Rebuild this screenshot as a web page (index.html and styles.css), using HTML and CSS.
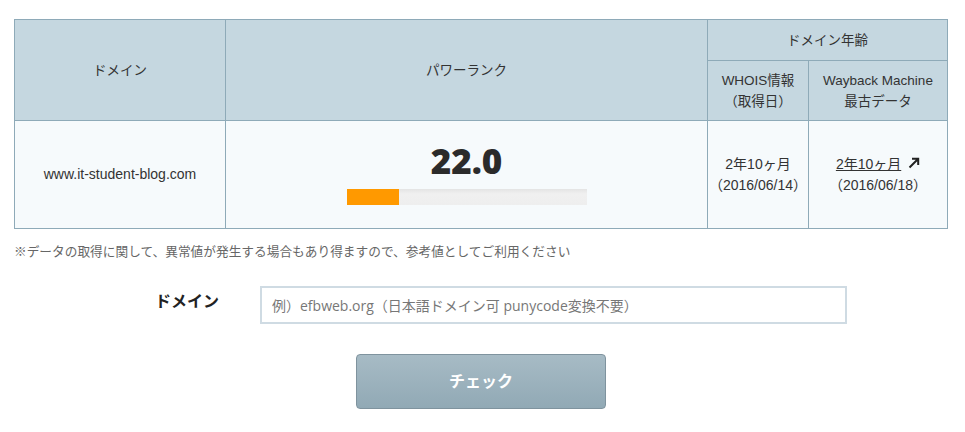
FILE: index.html
```html
<!DOCTYPE html>
<html lang="ja">
<head>
  <meta charset="UTF-8">
  <meta name="viewport" content="width=device-width, initial-scale=1.0">
  <title>パワーランクチェック</title>
  <link rel="stylesheet" href="styles.css">
</head>
<body>
  <div class="container">
    <table class="result">
      <colgroup>
        <col class="col-domain">
        <col class="col-rank">
        <col class="col-whois">
        <col class="col-wayback">
      </colgroup>
      <tr class="head-top">
        <th rowspan="2">ドメイン</th>
        <th rowspan="2">パワーランク</th>
        <th colspan="2">ドメイン年齢</th>
      </tr>
      <tr class="head-sub">
        <th>WHOIS情報<br>（取得日）</th>
        <th>Wayback Machine<br>最古データ</th>
      </tr>
      <tr class="body-row">
        <td class="domain">www.it-student-blog.com</td>
        <td>
          <div class="rank">22.0</div>
          <div class="bar"><div class="bar-fill" style="width: 22%"></div></div>
        </td>
        <td>2年10ヶ月<br>（2016/06/14）</td>
        <td>
          <a href="#" class="age-link">2年10ヶ月</a>
          <svg class="ext" width="12" height="12" viewBox="0 0 12 12"><path d="M1.5 10.5 L10 2 M4 1.8 H10.2 V8" fill="none" stroke="#222" stroke-width="2"/></svg>
          <br>（2016/06/18）
        </td>
      </tr>
    </table>

    <p class="note">※データの取得に関して、異常値が発生する場合もあり得ますので、参考値としてご利用ください</p>

    <form class="check-form">
      <div class="form-row">
        <label for="domain" class="form-label">ドメイン</label>
        <input type="text" id="domain" placeholder="例）efbweb.org（日本語ドメイン可 punycode変換不要）">
      </div>
      <button type="button" class="check-btn">チェック</button>
    </form>
  </div>
</body>
</html>
```

FILE: styles.css
```css
body {
  margin: 0;
  padding: 19px 14px 0;
  font-family: "Liberation Sans", "Noto Sans CJK JP", sans-serif;
  font-size: 13px;
  color: #333;
  background: #fff;
}

.container {
  width: 934px;
}

.result {
  width: 933px;
  border-collapse: collapse;
  table-layout: fixed;
}

.col-domain { width: 211px; }
.col-rank { width: 482px; }
.col-whois { width: 101px; }
.col-wayback { width: 139px; }

.result th,
.result td {
  border: 1px solid #8eaab8;
  text-align: center;
  vertical-align: middle;
  padding: 0;
  line-height: 21px;
}

.result th {
  background-color: #c5d7e0;
  font-weight: normal;
  font-size: 13.5px;
}

.result td {
  background-color: #f6fafc;
  font-size: 14px;
}

.head-top { height: 41px; }
.head-sub { height: 60px; }
.body-row { height: 108px; }

.rank {
  font-family: "Open Sans", sans-serif;
  font-weight: 800;
  font-size: 35px;
  line-height: 40px;
  color: #2b2b2b;
  margin-top: -4px;
}

.bar {
  width: 240px;
  height: 16px;
  margin: 8px auto 0;
  background: linear-gradient(#e4e4e4, #f0f0f0 30%, #eeeeee);
}

.bar-fill {
  height: 100%;
  background-color: #ff9900;
}

.age-link {
  color: #333;
  text-decoration: underline;
}

.ext {
  margin-left: 3px;
  vertical-align: 0;
}

.note {
  margin: 12px 0 0;
  font-size: 12.7px;
  color: #666;
}

.check-form {
  margin-top: 26px;
}

.form-row {
  display: flex;
  align-items: center;
}

.form-label {
  width: 246px;
  box-sizing: border-box;
  padding-left: 141px;
  font-size: 16px;
  font-weight: bold;
  color: #222;
  margin-top: -10px;
}

.form-row input {
  width: 587px;
  height: 38px;
  box-sizing: border-box;
  border: 2px solid #cfdbe3;
  padding: 0 10px;
  font-family: "Open Sans", "Noto Sans CJK JP", sans-serif;
  font-size: 14px;
  color: #333;
}

.form-row input::placeholder {
  color: #777;
}

.check-btn {
  display: block;
  width: 250px;
  height: 55px;
  margin: 30px 0 0 342px;
  border: 1px solid #7f939e;
  border-radius: 4px;
  background: linear-gradient(#a7bbc5, #91a9b5);
  color: #fff;
  font-family: "Liberation Sans", "Noto Sans CJK JP", sans-serif;
  font-size: 16px;
  font-weight: bold;
  padding: 0 0 4px;
}
```
